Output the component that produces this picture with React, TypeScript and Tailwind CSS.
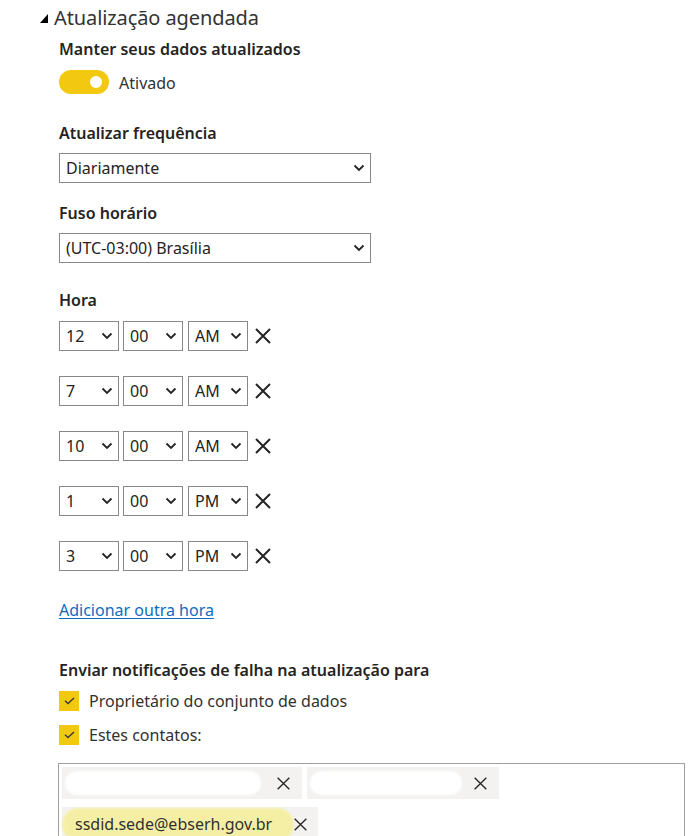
import React from "react";

const Chevron = () => (
    <svg width="12" height="8" viewBox="0 0 12 8" className="shrink-0">
        <path d="M1.5 1.5 L6 6 L10.5 1.5" fill="none" stroke="#252423" strokeWidth="1.8" />
    </svg>
);

const Cross = ({ size = 18, stroke = 2 }: { size?: number; stroke?: number }) => (
    <svg width={size} height={size} viewBox="0 0 18 18" className="shrink-0">
        <path d="M2 2 L16 16 M16 2 L2 16" fill="none" stroke="#252423" strokeWidth={stroke} />
    </svg>
);

const Select = ({ value, className }: { value: string; className: string }) => (
    <div className={`h-[30px] border border-[#8a8886] bg-white flex items-center justify-between pl-[6px] pr-[5px] text-[16px] text-[#252423] ${className}`}>
        <span className="leading-[20px]">{value}</span>
        <Chevron />
    </div>
);

const Check = () => (
    <div className="w-5 h-5 bg-[#f2c811] flex items-center justify-center shrink-0">
        <svg width="11" height="8" viewBox="0 0 11 8">
            <path d="M1 3.8 L4 6.6 L10 1" fill="none" stroke="#3b3a39" strokeWidth="1.4" />
        </svg>
    </div>
);

const times = [
    { h: "12", p: "AM" },
    { h: "7", p: "AM" },
    { h: "10", p: "AM" },
    { h: "1", p: "PM" },
    { h: "3", p: "PM" },
];

export default function App() {
    return (
        <div className="w-[690px] h-[836px] overflow-hidden bg-white font-['Noto_Sans',sans-serif] text-[#252423]">
            {/* header */}
            <div className="flex items-center pt-[6px] pl-[40px] h-[30px]">
                <svg width="8" height="9" viewBox="0 0 8 9" className="mr-[6px] mt-[1px]">
                    <path d="M8 0 L8 9 L0 9 Z" fill="#000" />
                </svg>
                <span className="text-[20px] leading-[24px] text-[#333] tracking-[-0.1px]">Atualização agendada</span>
            </div>

            <div className="pl-[59px] flex flex-col">
                <div className="mt-[9px] text-[16px] leading-[20px] font-semibold">Manter seus dados atualizados</div>
                <div className="mt-[11px] flex items-center h-[24px]">
                    <div className="w-[50px] h-[24px] rounded-full bg-[#f2c811] relative">
                        <div className="absolute right-[7px] top-[6px] w-3 h-3 rounded-full bg-white" />
                    </div>
                    <span className="ml-[10px] mt-[2px] text-[16px] leading-[20px] text-[#323130]">Ativado</span>
                </div>

                <div className="mt-[29px] text-[16px] leading-[20px] font-semibold">Atualizar frequência</div>
                <Select value="Diariamente" className="mt-[10px] w-[312px]" />

                <div className="mt-[20px] text-[16px] leading-[20px] font-semibold">Fuso horário</div>
                <Select value="(UTC-03:00) Brasília" className="mt-[10px] w-[312px]" />

                <div className="mt-[27px] text-[16px] leading-[20px] font-semibold">Hora</div>
                <div className="mt-[11px] flex flex-col gap-[25px]">
                    {times.map((t, i) => (
                        <div key={i} className="flex items-center h-[30px]">
                            <Select value={t.h} className="w-[60px]" />
                            <Select value="00" className="w-[60px] ml-[4px]" />
                            <Select value={t.p} className="w-[60px] ml-[5px] pl-[5px]" />
                            <div className="ml-[6px]">
                                <Cross />
                            </div>
                        </div>
                    ))}
                </div>

                <a href="#" className="mt-[29px] text-[16px] leading-[20px] text-[#0f6cbd] underline underline-offset-2 self-start">
                    Adicionar outra hora
                </a>

                <div className="mt-[40px] text-[16px] leading-[20px] font-semibold">Enviar notificações de falha na atualização para</div>
                <div className="mt-[11px] flex items-center gap-[10px] h-5">
                    <Check />
                    <span className="text-[16px] leading-[20px] text-[#323130]">Proprietário do conjunto de dados</span>
                </div>
                <div className="mt-[14px] flex items-center gap-[10px] h-5">
                    <Check />
                    <span className="text-[16px] leading-[20px] text-[#323130]">Estes contatos:</span>
                </div>

                {/* contacts */}
                <div className="mt-[18px] -ml-[1px] w-[627px] h-[120px] border border-[#a19f9d] p-[3px] flex flex-wrap content-start gap-x-[5px] gap-y-[4px]">
                    <div className="w-[240px] h-[32px] bg-[#f3f2f1] flex items-center relative">
                        <div className="absolute left-[3px] top-[4px] w-[196px] h-[24px] rounded-full bg-white blur-[1px]" />
                        <div className="ml-auto mr-[11px]">
                            <Cross size={15} stroke={1.6} />
                        </div>
                    </div>
                    <div className="w-[192px] h-[32px] bg-[#f3f2f1] flex items-center relative">
                        <div className="absolute left-[3px] top-[4px] w-[152px] h-[24px] rounded-full bg-white blur-[1px]" />
                        <div className="ml-auto mr-[11px]">
                            <Cross size={15} stroke={1.6} />
                        </div>
                    </div>
                    <div className="basis-full h-0" />
                    <div className="w-[256px] h-[34px] bg-[#f3f2f1] flex items-center relative">
                        <div className="absolute left-[0px] top-[1px] w-[232px] h-[33px] rounded-full bg-[#f5efa6] blur-[1px]" />
                        <span className="relative ml-[13px] text-[16px] leading-[20px] text-[#323130]">ssdid.sede@ebserh.gov.br</span>
                        <div className="relative ml-auto mr-[10px]">
                            <Cross size={15} stroke={1.6} />
                        </div>
                    </div>
                </div>
            </div>
        </div>
    );
}
